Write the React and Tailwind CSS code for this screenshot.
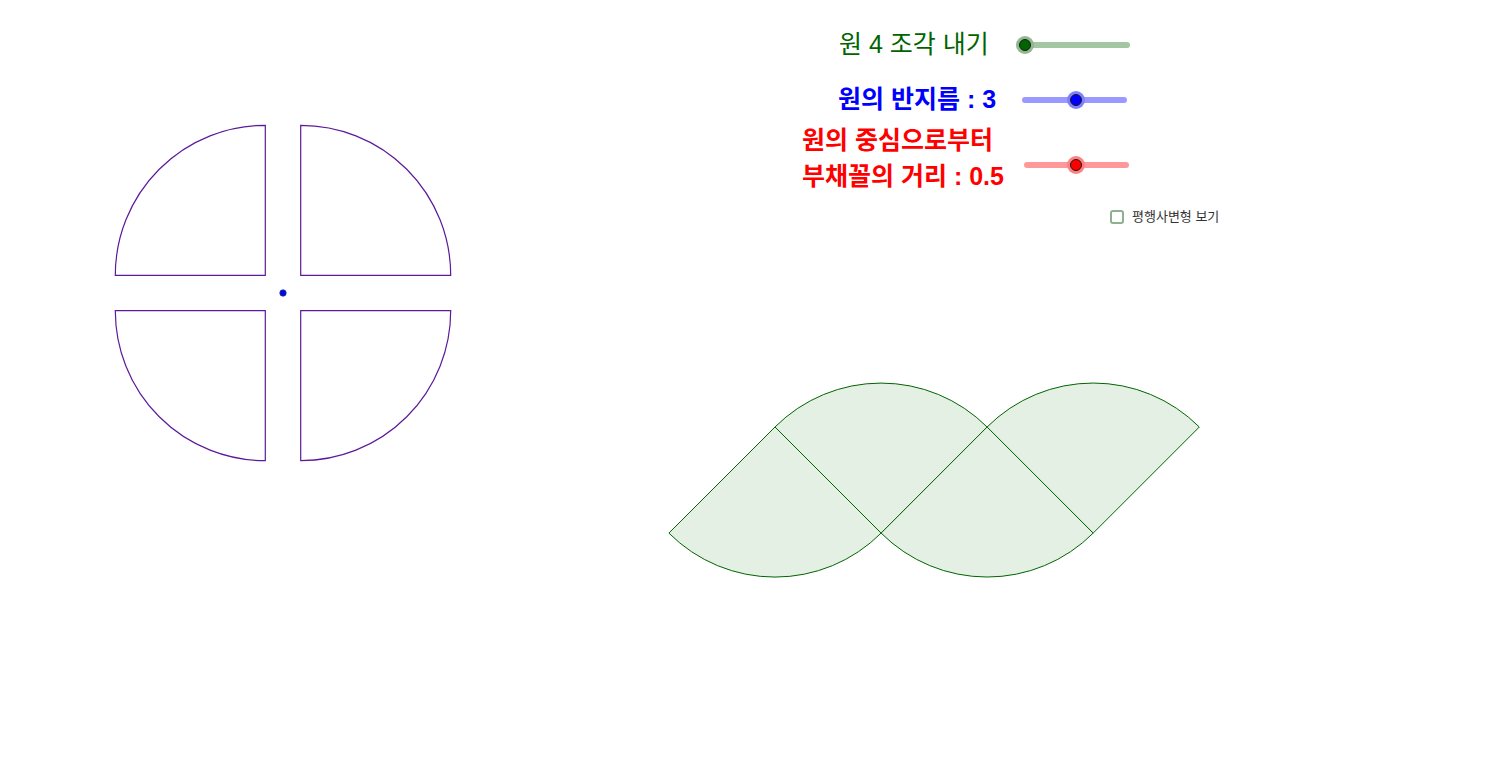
import React from "react";

const FONT = { fontFamily: '"Liberation Sans", "Noto Sans CJK KR", sans-serif' };

// quarter pieces of the circle, center (283, 293), r = 150, moved out by 0.5 unit
const quarters = [
  "M 265.3 275.3 L 115.3 275.3 A 150 150 0 0 1 265.3 125.3 Z",
  "M 300.7 275.3 L 300.7 125.3 A 150 150 0 0 1 450.7 275.3 Z",
  "M 300.7 310.7 L 450.7 310.7 A 150 150 0 0 1 300.7 460.7 Z",
  "M 265.3 310.7 L 265.3 460.7 A 150 150 0 0 1 115.3 310.7 Z",
];

// the same pieces laid side by side
const sectors = [
  "M 775 427 L 668.9 533.1 A 150 150 0 0 0 881.1 533.1 Z",
  "M 881.1 533.1 L 775 427 A 150 150 0 0 1 987.1 427 Z",
  "M 987.1 427 L 881.1 533.1 A 150 150 0 0 0 1093.2 533.1 Z",
  "M 1093.2 533.1 L 987.1 427 A 150 150 0 0 1 1199.3 427 Z",
];

function Slider({ track, knob, halo, pos, className }) {
  return (
    <div className={`relative w-[105px] h-[14px] ${className}`}>
      <div className={`absolute left-0 right-0 top-[4px] h-[6px] rounded-full ${track}`} />
      <div
        className={`absolute top-[-2px] w-[18px] h-[18px] -ml-[9px] rounded-full ${halo}`}
        style={{ left: `${pos * 100}%` }}
      />
      <div
        className={`absolute top-[1px] w-[12px] h-[12px] -ml-[6px] rounded-full border border-[#1a1a1a] ${knob}`}
        style={{ left: `${pos * 100}%` }}
      />
    </div>
  );
}

export default function App() {
  return (
    <div className="relative w-[1499px] h-[776px] bg-white overflow-hidden" style={FONT}>
      <svg className="absolute inset-0" width="1499" height="776" viewBox="0 0 1499 776">
        {quarters.map((d, i) => (
          <path key={i} d={d} fill="none" stroke="#5c1a9a" strokeWidth="1.2" />
        ))}
        <circle cx="283" cy="293" r="3.2" fill="#0000ff" stroke="#1d3b5c" strokeWidth="0.8" />
        {sectors.map((d, i) => (
          <path key={i} d={d} fill="#e5f0e5" stroke="#006400" strokeWidth="1" />
        ))}
      </svg>

      <div className="absolute left-[800px] top-[28px] flex flex-col">
        <div className="flex items-center h-[32px]">
          <span className="ml-[39px] text-[25px] text-[#006400] leading-[32px]">원 4 조각 내기</span>
          <Slider
            className="ml-[36px] mt-[1px]"
            track="bg-[#a2c5a2]"
            halo="bg-[#8fb88f]"
            knob="bg-[#006400]"
            pos={0}
          />
        </div>
        <div className="flex items-center h-[32px] mt-[23px]">
          <span className="ml-[38px] text-[25px] font-bold text-[#0000ff] leading-[32px]">
            원의 반지름 : 3
          </span>
          <Slider
            className="ml-[26px] mt-[2px]"
            track="bg-[#9999ff]"
            halo="bg-[#8080ff]"
            knob="bg-[#0000ff]"
            pos={0.51}
          />
        </div>
        <div className="flex items-start mt-[7px]">
          <div className="ml-[2px] text-[25px] font-bold text-[#ff0000] leading-[36px]">
            <div>원의 중심으로부터</div>
            <div>부채꼴의 거리 : 0.5</div>
          </div>
          <Slider
            className="ml-[20px] mt-[36px]"
            track="bg-[#ff9999]"
            halo="bg-[#ff8080]"
            knob="bg-[#ff0000]"
            pos={0.5}
          />
        </div>
        <div className="flex items-center mt-[13px] ml-[310px]">
          <div className="w-[14px] h-[14px] rounded-[3px] border-2 border-[#8fb08f] bg-white" />
          <span className="ml-[8px] text-[13px] text-[#333333]">평행사변형 보기</span>
        </div>
      </div>
    </div>
  );
}
